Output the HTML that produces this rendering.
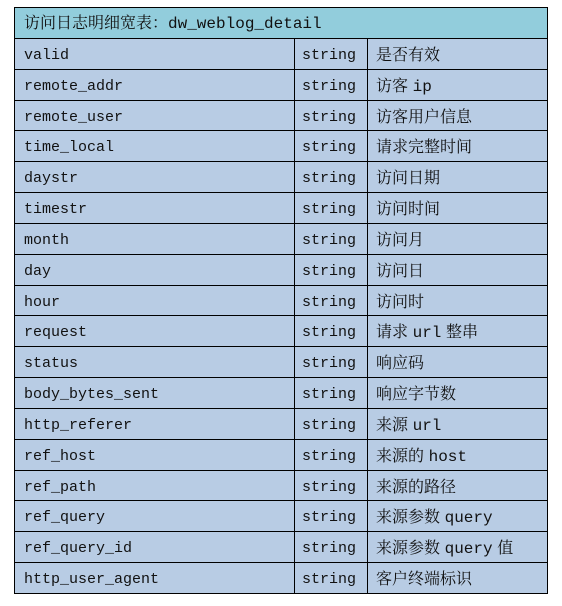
<!DOCTYPE html>
<html><head><meta charset="utf-8"><style>
body{margin:0;background:#fff;width:562px;height:606px;position:relative;overflow:hidden}
.t{position:absolute;left:14px;top:7px;width:534px;border:1px solid #000;box-sizing:border-box}
.r{height:30.83px;border-top:1px solid #000;box-sizing:border-box;background:#B8CCE4;display:flex;font:15px "Liberation Mono","Noto Serif CJK SC",monospace;color:#111;line-height:34px;overflow:hidden}
.h{height:30px;border-top:none;background:#92CDDC;line-height:32px}
.c1{width:280px;padding-left:9px;box-sizing:border-box;border-right:1px solid #000}
.c2{width:73px;padding-left:7px;box-sizing:border-box;border-right:1px solid #000}
.c3{padding-left:8px}
.cn{font-family:"Liberation Mono","Noto Serif CJK SC",serif;font-size:16px;word-spacing:-5px}
</style></head><body>
<div class="t">
<div class="r h"><div style="padding-left:9px" class="cn">访问日志明细宽表：dw_weblog_detail</div></div>
<div class="r"><div class="c1">valid</div><div class="c2">string</div><div class="c3 cn">是否有效</div></div>
<div class="r"><div class="c1">remote_addr</div><div class="c2">string</div><div class="c3 cn">访客 ip</div></div>
<div class="r"><div class="c1">remote_user</div><div class="c2">string</div><div class="c3 cn">访客用户信息</div></div>
<div class="r"><div class="c1">time_local</div><div class="c2">string</div><div class="c3 cn">请求完整时间</div></div>
<div class="r"><div class="c1">daystr</div><div class="c2">string</div><div class="c3 cn">访问日期</div></div>
<div class="r"><div class="c1">timestr</div><div class="c2">string</div><div class="c3 cn">访问时间</div></div>
<div class="r"><div class="c1">month</div><div class="c2">string</div><div class="c3 cn">访问月</div></div>
<div class="r"><div class="c1">day</div><div class="c2">string</div><div class="c3 cn">访问日</div></div>
<div class="r"><div class="c1">hour</div><div class="c2">string</div><div class="c3 cn">访问时</div></div>
<div class="r"><div class="c1">request</div><div class="c2">string</div><div class="c3 cn">请求 url 整串</div></div>
<div class="r"><div class="c1">status</div><div class="c2">string</div><div class="c3 cn">响应码</div></div>
<div class="r"><div class="c1">body_bytes_sent</div><div class="c2">string</div><div class="c3 cn">响应字节数</div></div>
<div class="r"><div class="c1">http_referer</div><div class="c2">string</div><div class="c3 cn">来源 url</div></div>
<div class="r"><div class="c1">ref_host</div><div class="c2">string</div><div class="c3 cn">来源的 host</div></div>
<div class="r"><div class="c1">ref_path</div><div class="c2">string</div><div class="c3 cn">来源的路径</div></div>
<div class="r"><div class="c1">ref_query</div><div class="c2">string</div><div class="c3 cn">来源参数 query</div></div>
<div class="r"><div class="c1">ref_query_id</div><div class="c2">string</div><div class="c3 cn">来源参数 query 值</div></div>
<div class="r"><div class="c1">http_user_agent</div><div class="c2">string</div><div class="c3 cn">客户终端标识</div></div>
</div>
</body></html>
